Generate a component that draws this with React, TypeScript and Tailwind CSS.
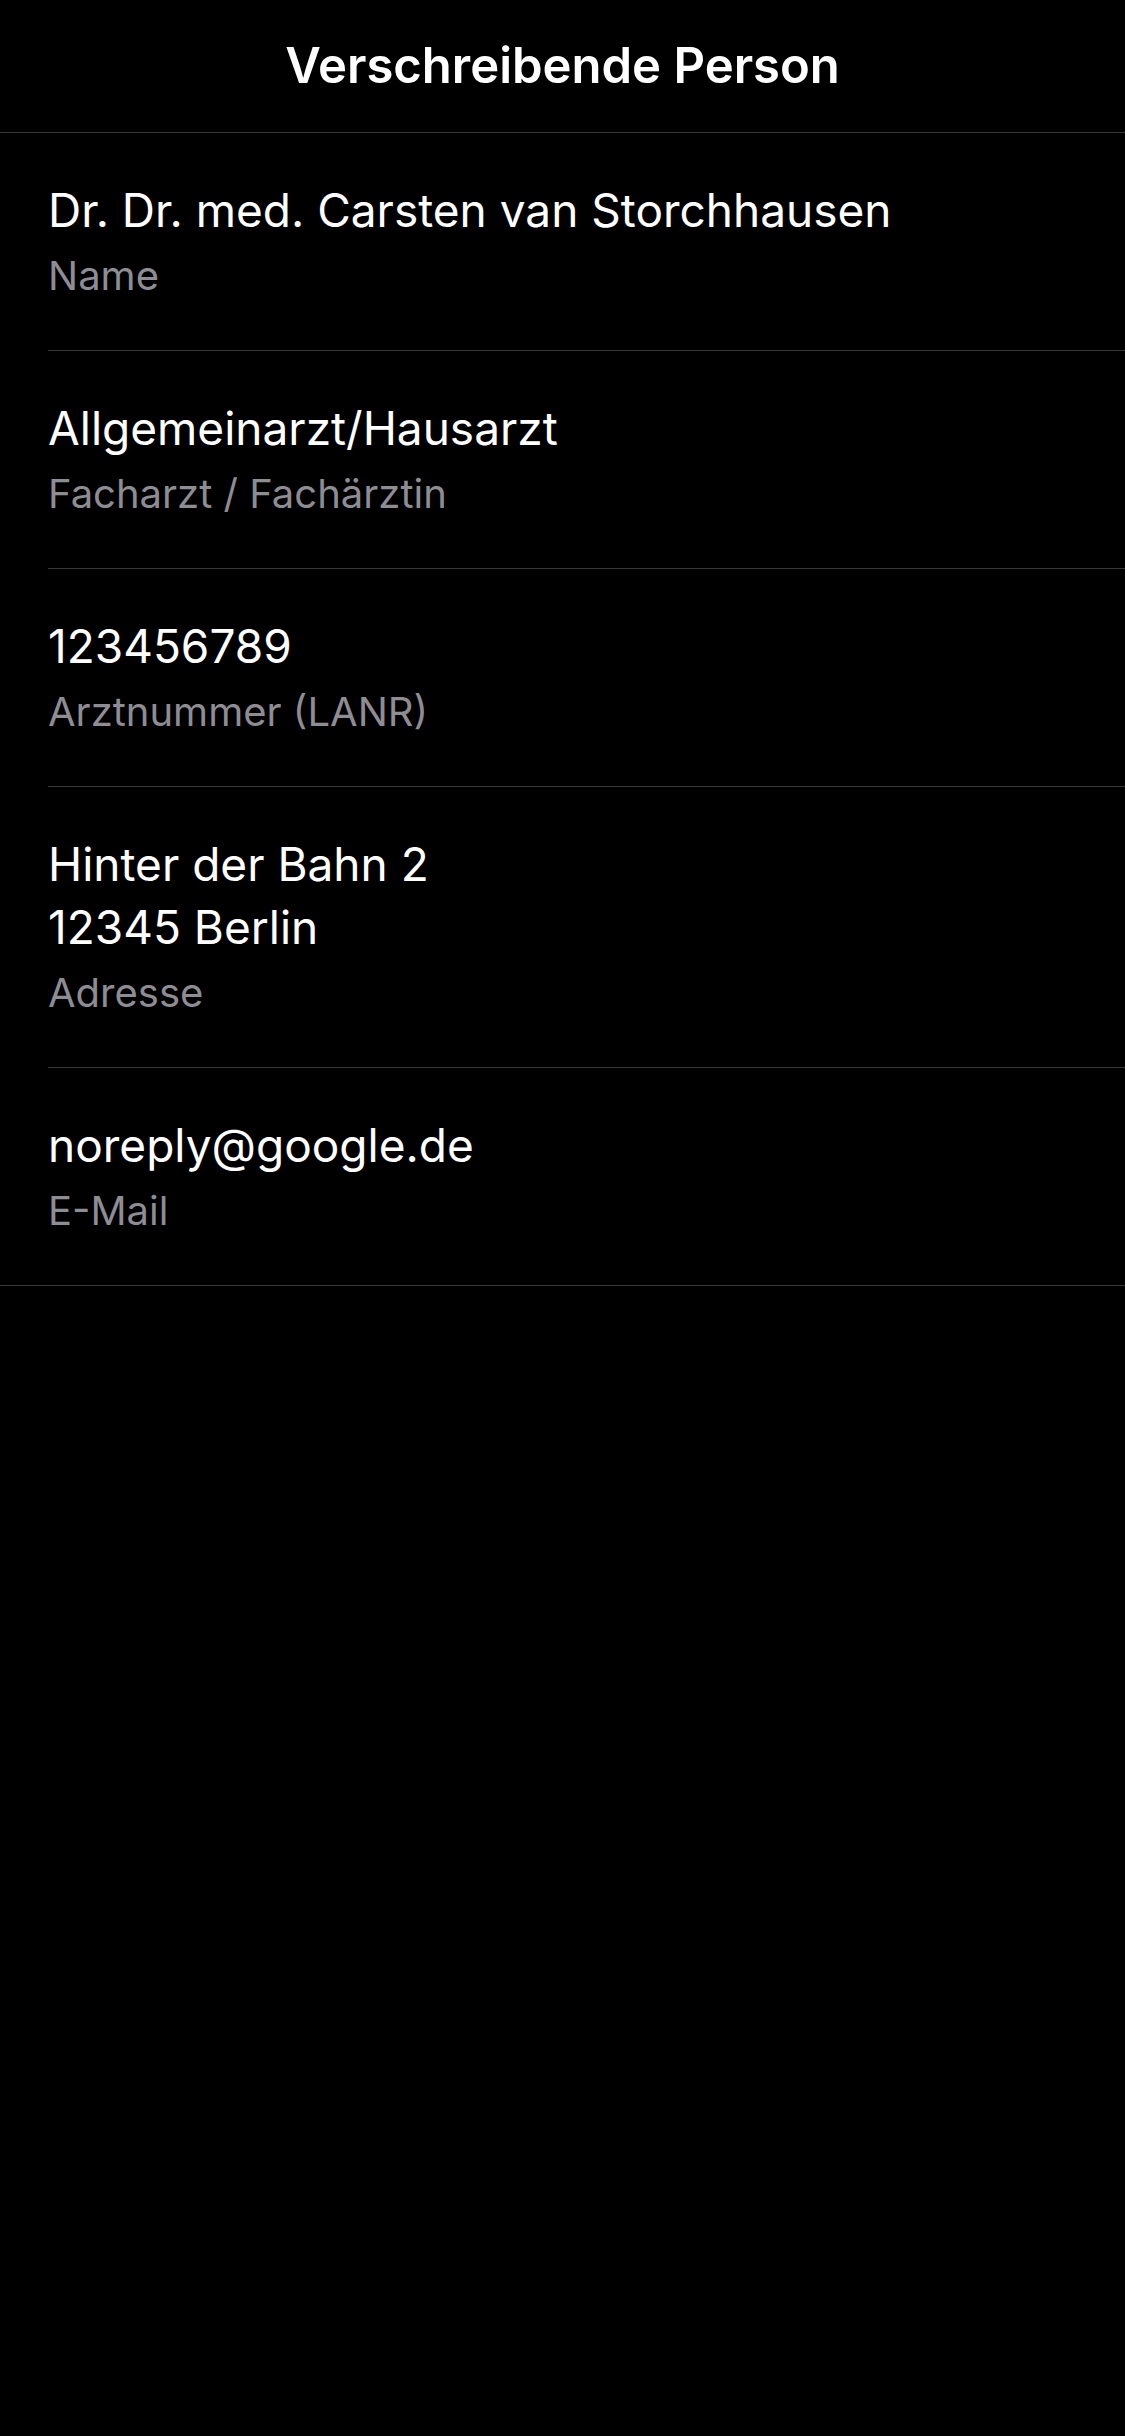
const fields = [
  { lines: ["Dr. Dr. med. Carsten van Storchhausen"], label: "Name" },
  { lines: ["Allgemeinarzt/Hausarzt"], label: "Facharzt / Fachärztin" },
  { lines: ["123456789"], label: "Arztnummer (LANR)" },
  { lines: ["Hinter der Bahn 2", "12345 Berlin"], label: "Adresse" },
  { lines: ["noreply@google.de"], label: "E-Mail" },
];

function FieldRow({ lines, label, last }: { lines: string[]; label: string; last: boolean }) {
  return (
    <div className="pl-[48px]">
      <div className={last ? "pt-[46px] pb-[43px]" : "pt-[46px] pb-[43px] border-b border-[#38383a]"}>
        {lines.map((line) => (
          <div key={line} className="text-[46px] leading-[63px] text-white">
            {line}
          </div>
        ))}
        <div className="mt-[2px] text-[40px] leading-[63px] text-[#8d8d93]">{label}</div>
      </div>
    </div>
  );
}

export default function App() {
  return (
    <div className="min-h-screen bg-black font-['Inter','Liberation_Sans',sans-serif] antialiased">
      {/* Navigation bar */}
      <header className="pt-[36px] pb-[37px] border-b border-[#38383a] text-center">
        <h1 className="text-[49px] leading-[59px] font-semibold text-white">Verschreibende Person</h1>
      </header>

      {/* Prescriber details */}
      <div className="border-b border-[#38383a]">
        {fields.map((f, i) => (
          <FieldRow key={f.label} lines={f.lines} label={f.label} last={i === fields.length - 1} />
        ))}
      </div>
    </div>
  );
}
